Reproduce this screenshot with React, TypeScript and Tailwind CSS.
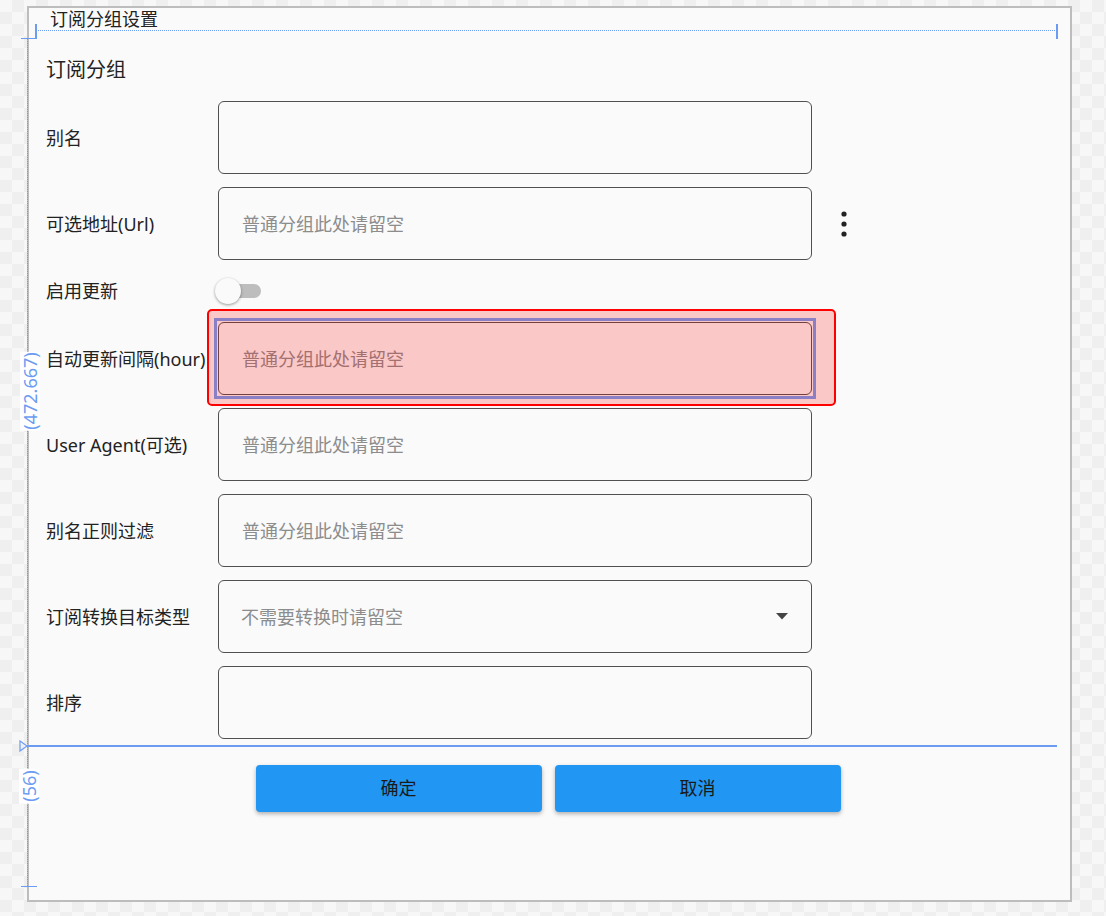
import React from 'react';

const font = "font-['Noto_Sans','Noto_Sans_CJK_SC',sans-serif]";

function TextField({ placeholder }: { placeholder?: string }) {
  return (
    <div className="w-[594px] h-[73px] rounded-[6px] border border-[#505050] flex items-center pl-[23px] text-[18px] text-[#8c8c8c] leading-none">
      {placeholder}
    </div>
  );
}

function Row({ label, children }: { label: string; children: React.ReactNode }) {
  return (
    <div className="flex items-center">
      <div className="w-[172px] text-[18px] leading-none text-[#222] whitespace-nowrap">{label}</div>
      {children}
    </div>
  );
}

export default function App() {
  const hint = '普通分组此处请留空';
  return (
    <div
      className={`relative w-[1106px] h-[916px] overflow-hidden ${font} bg-[#f7f7f7] bg-[image:conic-gradient(#efefef_25%,#f7f7f7_0_50%,#efefef_0_75%,#f7f7f7_0)] bg-[length:24px_24px]`}
    >
      {/* Dialog panel */}
      <div className="ml-[27px] mt-[6px] w-[1045px] h-[896px] border-2 border-[#bdbdbd] bg-[#fafafa] flex flex-col">
        <div className="h-[22px] pl-[21px] text-[18px] leading-[22px] text-[#222]">订阅分组设置</div>

        <div className="pl-[17px] flex flex-col">
          <div className="mt-[20px] h-[40px] leading-[40px] text-[20px] text-[#222]">订阅分组</div>

          <div className="mt-[11px] flex flex-col gap-[13px]">
            <Row label="别名">
              <TextField />
            </Row>
            <Row label="可选地址(Url)">
              <TextField placeholder={hint} />
              <svg className="ml-[29px]" width="6" height="26" viewBox="0 0 6 26">
                <circle cx="3" cy="3" r="2.6" fill="#222" />
                <circle cx="3" cy="13" r="2.6" fill="#222" />
                <circle cx="3" cy="23" r="2.6" fill="#222" />
              </svg>
            </Row>
            <div className="flex items-center h-[36px]">
              <div className="w-[172px] text-[18px] leading-none text-[#222]">启用更新</div>
              <div className="relative w-[48px] h-[26px] -ml-[3px]">
                <div className="absolute left-[8px] top-[6px] w-[38px] h-[14px] rounded-full bg-[#bdbdbd]" />
                <div className="absolute left-0 top-0 w-[26px] h-[26px] rounded-full bg-[#fafafa] shadow-[0_1px_3px_rgba(0,0,0,0.4)]" />
              </div>
            </div>
            <Row label="自动更新间隔(hour)">
              <TextField placeholder={hint} />
            </Row>
            <Row label="User Agent(可选)">
              <TextField placeholder={hint} />
            </Row>
            <Row label="别名正则过滤">
              <TextField placeholder={hint} />
            </Row>
            <Row label="订阅转换目标类型">
              <div className="w-[594px] h-[73px] rounded-[6px] border border-[#505050] flex items-center justify-between pl-[22px] pr-[23px] text-[18px] text-[#8c8c8c] leading-none">
                <span>不需要转换时请留空</span>
                <svg width="12" height="7" viewBox="0 0 12 7">
                  <path d="M0 0 L12 0 L6 6.5 Z" fill="#444" />
                </svg>
              </div>
            </Row>
            <Row label="排序">
              <TextField />
            </Row>
          </div>

          <div className="mt-[26px] flex justify-center gap-[13px] pr-[20px]">
            <button className="w-[286px] h-[47px] rounded-[4px] bg-[#2196f3] text-[18px] text-[#1a1a1a] shadow-[0_2px_4px_rgba(0,0,0,0.3)]">
              确定
            </button>
            <button className="w-[286px] h-[47px] rounded-[4px] bg-[#2196f3] text-[18px] text-[#1a1a1a] shadow-[0_2px_4px_rgba(0,0,0,0.3)]">
              取消
            </button>
          </div>
        </div>
      </div>

      {/* Designer selection overlay */}
      <div className="absolute left-[214px] top-[318px] w-[602px] h-[81px] border-[3px] border-[#6e9ff8]" />
      <div className="absolute left-[207px] top-[309px] w-[629px] h-[97px] border-2 border-[#ff0000] rounded-[5px] bg-[rgba(255,0,0,0.2)]" />

      {/* Designer guides */}
      <div className="absolute left-[36px] top-[30px] w-[1021px] border-t-[1.5px] border-dotted border-[#6c9cf2]" />
      <div className="absolute left-[1056px] top-[24px] w-[2px] h-[15px] bg-[#6c9cf2]" />
      <div className="absolute left-[35px] top-[24px] w-[2px] h-[15px] bg-[#6c9cf2]" />
      <div className="absolute left-[21px] top-[38px] w-[16px] h-[1px] bg-[#6c9cf2]" />
      <div className="absolute left-[27px] top-[39px] h-[847px] border-l border-dotted border-[#6c9cf2]" />
      <div className="absolute left-[27px] top-[745px] w-[1030px] h-[1.5px] bg-[#6c9cf2]" />
      <svg className="absolute left-[19px] top-[740px]" width="9" height="12" viewBox="0 0 9 12">
        <path d="M1 1 L8 6 L1 11 Z" fill="none" stroke="#6c9cf2" strokeWidth="1.2" />
      </svg>
      <div className="absolute left-[21px] top-[886px] w-[16px] h-[1px] bg-[#6c9cf2]" />

      <div className="absolute left-[30px] top-[391px] -translate-x-1/2 -translate-y-1/2 -rotate-90 bg-white px-[1px] text-[18px] leading-[20px] text-[#6c9cf2] whitespace-nowrap">
        (472.667)
      </div>
      <div className="absolute left-[29px] top-[786px] -translate-x-1/2 -translate-y-1/2 -rotate-90 bg-white px-[2px] text-[18px] leading-[20px] text-[#6c9cf2] whitespace-nowrap">
        (56)
      </div>
    </div>
  );
}
